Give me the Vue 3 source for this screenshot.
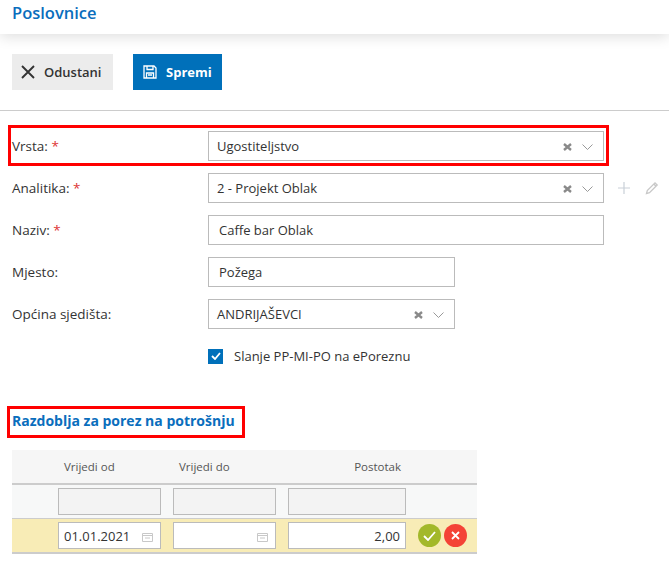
<script setup>
const rows = [
  { label: 'Analitika:', req: true, value: '2 - Projekt Oblak', type: 'select', size: 'wide', tools: true },
  { label: 'Naziv:', req: true, value: 'Caffe bar Oblak', type: 'text', size: 'wide' },
  { label: 'Mjesto:', value: 'Požega', type: 'text', size: 'mid' },
  { label: 'Općina sjedišta:', value: 'ANDRIJAŠEVCI', type: 'select', size: 'mid' }
]
</script>

<template>
  <div class="page">
    <header class="top"><h1>Poslovnice</h1></header>
    <div class="actions">
      <button class="btn cancel">
        <svg width="14" height="14" viewBox="0 0 14 14"><path d="M1 1l12 12M13 1L1 13" fill="none" stroke="#333" stroke-width="1.9"/></svg>
        Odustani
      </button>
      <button class="btn save">
        <svg width="14" height="14" viewBox="0 0 14 14" fill="none" stroke="#fff" stroke-width="1.3"><path d="M1 1h10l2 2v10H1z"/><path d="M4 1v3.5h6V1M3.5 13V8h7v5M5 10h4"/></svg>
        Spremi
      </button>
    </div>
    <div class="form">
      <div class="row marked">
        <label>Vrsta: <i>*</i></label>
        <div class="field wide select">
          <span>Ugostiteljstvo</span>
          <svg class="clear" width="9" height="8" viewBox="0 0 9 8"><path d="M1 1l7 6M8 1L1 7" stroke="#8a8a8a" stroke-width="2.4"/></svg>
          <svg class="chev" width="11" height="6" viewBox="0 0 11 6"><path d="M.5.5l5 5 5-5" fill="none" stroke="#999"/></svg>
        </div>
      </div>
      <div v-for="r in rows" :key="r.label" class="row">
        <label>{{ r.label }} <i v-if="r.req">*</i></label>
        <div class="field" :class="[r.size, r.type]">
          <span>{{ r.value }}</span>
          <template v-if="r.type === 'select'">
            <svg class="clear" width="9" height="8" viewBox="0 0 9 8"><path d="M1 1l7 6M8 1L1 7" stroke="#8a8a8a" stroke-width="2.4"/></svg>
            <svg class="chev" width="11" height="6" viewBox="0 0 11 6"><path d="M.5.5l5 5 5-5" fill="none" stroke="#999"/></svg>
          </template>
        </div>
        <div v-if="r.tools" class="tools">
          <svg width="12" height="12" viewBox="0 0 12 12"><path d="M6 0v12M0 6h12" stroke="#c9d0d8" stroke-width="1.2"/></svg>
          <svg width="14" height="14" viewBox="0 0 14 14" fill="none" stroke="#c8c8c8" stroke-width="1.3"><path d="M1.5 12.5l.8-3L10 1.8l2.2 2.2-7.7 7.7zM8.8 3l2.2 2.2"/></svg>
        </div>
      </div>
      <div class="check">
        <span class="box"><svg width="10" height="8" viewBox="0 0 10 8"><path d="M1 4l3 3 5-6" fill="none" stroke="#fff" stroke-width="1.8"/></svg></span>
        Slanje PP-MI-PO na ePoreznu
      </div>
    </div>
    <h2 class="section"><span>Razdoblja za porez na potrošnju</span></h2>
    <div class="table">
      <div class="tr head">
        <div class="c1">Vrijedi od</div>
        <div class="c2">Vrijedi do</div>
        <div class="c3">Postotak</div>
      </div>
      <div class="tr filter">
        <div class="inp c1"></div>
        <div class="inp c2"></div>
        <div class="inp c3"></div>
      </div>
      <div class="tr edit">
        <div class="inp c1">01.01.2021<svg class="cal" width="11" height="10" viewBox="0 0 11 10" fill="none" stroke="#c8c8c8"><path d="M.5 1.5h10v8H.5zM.5 3.5h10M3 6h5"/></svg></div>
        <div class="inp c2"><svg class="cal" width="11" height="10" viewBox="0 0 11 10" fill="none" stroke="#c8c8c8"><path d="M.5 1.5h10v8H.5zM.5 3.5h10M3 6h5"/></svg></div>
        <div class="inp c3 num">2,00</div>
        <div class="round ok"><svg width="13" height="10" viewBox="0 0 13 10"><path d="M1 5l4 4 7-8" fill="none" stroke="#fff" stroke-width="1.8"/></svg></div>
        <div class="round no"><svg width="9" height="9" viewBox="0 0 9 9"><path d="M1 1l7 7M8 1L1 8" stroke="#fff" stroke-width="1.8"/></svg></div>
      </div>
    </div>
  </div>
</template>

<style scoped>
.page { width: 669px; height: 574px; overflow: hidden; font-family: "Open Sans", sans-serif; font-size: 13px; color: #333; background: #fff; }
.top { height: 34px; padding-left: 12px; box-shadow: 0 3px 14px rgba(0,0,0,.13); }
h1 { margin: 0; font-size: 16.5px; line-height: 26px; font-weight: 600; color: #0a6ebd; }
.actions { display: flex; gap: 20px; padding: 20px 12px; height: 36px; border-bottom: 1px solid #ccc; }
.btn { height: 36px; border: 0; padding: 0; display: flex; align-items: center; font: 600 13px "Open Sans", sans-serif; }
.cancel { width: 101px; background: #ececec; color: #333; padding-left: 9px; gap: 9px; }
.save { width: 89px; background: #0070ba; color: #fff; padding-left: 10px; gap: 9px; font-weight: 700; }
.form { padding: 20px 12px 0; }
.row { position: relative; display: flex; align-items: center; height: 30px; margin-bottom: 12px; }
.marked::after { content: ""; position: absolute; left: -4px; top: -6px; width: 595px; height: 35px; border: 3px solid #f00; }
label { width: 196px; flex: none; font-size: 13.5px; }
label i { color: #d33; font-style: normal; }
.field { flex: none; height: 30px; box-sizing: border-box; border: 1px solid #bbb; display: flex; align-items: center; background: #fff; position: relative; }
.wide { width: 396px; }
.mid { width: 247px; }
.select { padding-left: 8px; }
.text { padding-left: 10px; }
.clear { position: absolute; right: 31px; top: 11px; }
.chev { position: absolute; right: 10px; top: 12px; }
.tools { flex: none; display: flex; align-items: center; gap: 15px; margin-left: 14px; }
.check { display: flex; align-items: center; gap: 11px; margin: 20px 0 0 196px; height: 14px; }
.box { width: 15px; height: 15px; background: #0070ba; display: flex; align-items: center; justify-content: center; }
.section { margin: 47px 0 0 12px; font-size: 14px; line-height: 22px; font-weight: 700; color: #0a6ebd; }
.section span { position: relative; display: inline-block; }
.section span::after { content: ""; position: absolute; left: -5px; top: -4px; width: 232px; height: 26px; border: 3px solid #f00; }
.table { margin: 18px 0 0 12px; width: 465px; font-size: 11.5px; }
.tr { position: relative; display: flex; align-items: center; box-sizing: border-box; padding-left: 46px; gap: 12px; }
.c1, .c2 { width: 103px; box-sizing: border-box; flex: none; }
.c3 { width: 118px; box-sizing: border-box; flex: none; }
.head { height: 35px; background: #f6f6f6; border-bottom: 2px solid #ccc; color: #555; }
.head div { text-align: left; padding-left: 6px; }
.head .c3 { text-align: right; padding-right: 5px; }
.filter { height: 34px; background: #f7f8f8; border-bottom: 1px solid #ccc; }
.filter .inp { background: #f3f3f3; }
.edit { height: 35px; background: #f8ecb6; border-bottom: 2px solid #ccc; }
.inp { height: 27px; border: 1px solid #bbb; background: #fff; position: relative; display: flex; align-items: center; padding-left: 5px; font-size: 13px; }
.num { justify-content: flex-end; padding-right: 5px; }
.cal { position: absolute; right: 7px; top: 9px; }
.round { width: 23px; height: 23px; border-radius: 50%; display: flex; align-items: center; justify-content: center; flex: none; }
.ok { background: #a3b82a; margin-right: -9px; }
.no { background: #f44336; }
</style>
